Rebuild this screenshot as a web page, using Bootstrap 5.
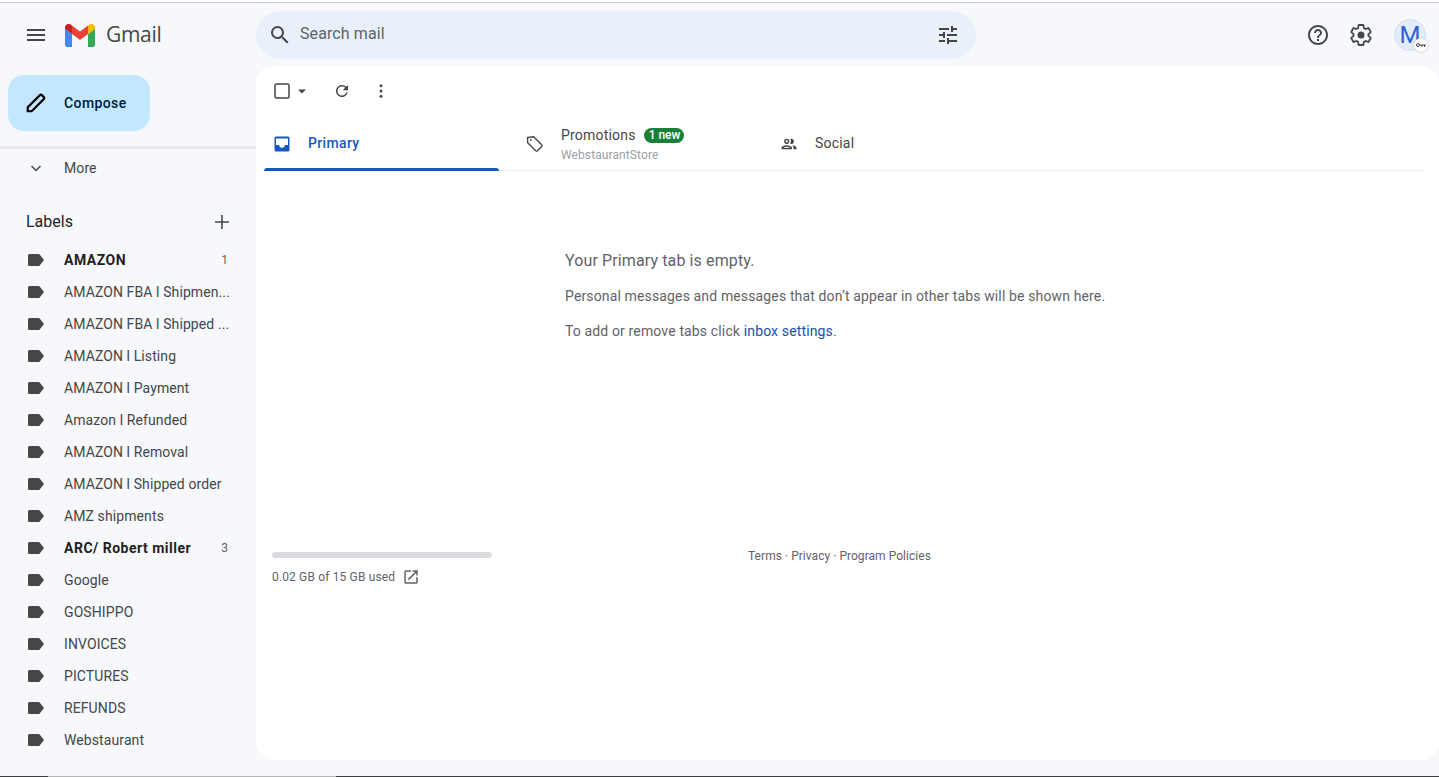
<!DOCTYPE html>
<html lang="en">
<head>
    <meta charset="UTF-8">
    <meta name="viewport" content="width=device-width, initial-scale=1.0">
    <title>Gmail</title>
    <link href="https://cdn.jsdelivr.net/npm/bootstrap@5.3.0/dist/css/bootstrap.min.css" rel="stylesheet">
    <style>
        html, body { height: 100%; overflow: hidden; }
        body {
            background-color: #f6f8fc;
            font-family: Roboto, "Liberation Sans", sans-serif;
            font-size: 14px;
            color: #444746;
        }
        .page-wrap { height: 775px; border-top: 1px solid #c8c9cb; }
        .top-strip { height: 2px; background: #fff; }
        .top-bar { height: 64px; }
        .brand-area { width: 256px; padding-left: 24px; }
        .logo-mark { margin-left: 17px; }
        .gmail-word { font-size: 21px; color: #444746; margin-left: 11px; font-family: "Open Sans", Roboto, sans-serif; letter-spacing: -.3px; }
        .search-box { width: 720px; height: 48px; border-radius: 24px; background: #e9f0fa; padding: 0 16px 0 12px; color: #5f6368; font-size: 16px; }
        .search-box .search-text { margin-left: 8px; padding-bottom: 2px; letter-spacing: .1px; }
        .top-icons { padding-right: 13px; gap: 19px; }
        .avatar-ring { width: 32px; height: 32px; border-radius: 50%; background: #e3ecfb; border: 1px solid #d5dff0; color: #2f62d1; font-size: 24px; line-height: 30px; text-align: center; position: relative; margin-left: 2px; }
        .key-chip { position: absolute; right: -3px; bottom: -2px; width: 14px; height: 14px; border-radius: 50%; background: #fff; box-shadow: 0 0 2px rgba(0,0,0,.3); display: flex; align-items: center; justify-content: center; }
        .side-col { width: 256px; flex: none; }
        .compose-btn { width: 142px; height: 56px; margin: 8px 0 0 8px; border-radius: 16px; background: #c2e7ff; color: #001d35; font-weight: 500; padding-left: 17px; font-size: 14px; letter-spacing: .4px; }
        .compose-btn span { margin-left: 17px; }
        .side-rule { height: 3px; background: #e9eaee; margin-top: 15px; }
        .more-row { height: 32px; padding-left: 29px; margin-top: 3px; }
        .more-row span { margin-left: 21px; letter-spacing: .1px; }
        .labels-head { height: 28px; padding: 0 27px 0 26px; margin-top: 24px; margin-bottom: 8px; font-size: 16px; color: #1f1f1f; }
        .label-row { height: 32px; padding: 0 26px 0 28px; letter-spacing: .1px; }
        .label-row .label-name { margin-left: 20px; flex: 1; white-space: nowrap; overflow: hidden; min-width: 0; }
        .label-row.is-unread { font-weight: 700; color: #1f1f1f; letter-spacing: .5px; }
        .label-count { font-size: 12px; font-weight: 400; color: #5f6368; margin: 0 2px 0 8px; letter-spacing: 0; }
        .main-panel { width: 1183px; height: 693px; background: #fff; border-radius: 16px; padding: 0 15px 0 8px; flex: none; }
        .tool-row { height: 48px; padding-left: 10px; }
        .caret-icon { margin-left: 8px; }
        .refresh-icon { margin-left: 27px; }
        .dots-icon { margin-left: 21px; }
        .tab-row { border-bottom: 1px solid #eceff1; height: 56px; }
        .tab-item { width: 235px; padding: 2px 0 0 10px; height: 55px; position: relative; letter-spacing: .2px; }
        .tab-item.is-active { color: #1558c0; font-weight: 500; letter-spacing: .35px; }
        .tab-item.is-active::after { content: ""; position: absolute; left: 0; right: 0; bottom: -1px; height: 3px; background: #1558c0; border-radius: 3px 3px 0 0; }
        .tab-promo { width: 253px; padding-left: 27px; }
        .tab-social { padding-left: 28px; }
        .tab-title { margin-left: 18px; }
        .tab-social .tab-title { margin-left: 17px; }
        .promo-text { margin-left: 17px; padding-top: 2px; }
        .promo-head { line-height: 18px; }
        .tab-sub { font-size: 12px; color: #9aa0a6; line-height: 16px; margin-top: 3px; letter-spacing: .1px; }
        .new-pill { background: #188038; color: #fff; font-size: 12px; font-weight: 500; border-radius: 8px; line-height: 15px; padding: 0 4px 0 5px; margin-left: 8px; letter-spacing: 0; }
        .empty-box { margin: 78px 0 0 301px; }
        .empty-title { font-size: 16px; color: #5f6368; margin-bottom: 13px; letter-spacing: .12px; }
        .empty-line { color: #5f6368; margin-bottom: 15px; line-height: 20px; letter-spacing: .14px; }
        .empty-line a { color: #1a4fb0; text-decoration: none; }
        .foot-row { margin-top: 211px; padding-left: 8px; font-size: 12px; color: #5f6368; }
        .storage-col { width: 220px; flex: none; }
        .storage-bar { height: 6px; border-radius: 3px; background: #dadce0; margin-bottom: 10px; }
        .storage-text { letter-spacing: .15px; }
        .storage-link { margin-left: 7px; }
        .foot-links { margin-left: 256px; margin-top: -5px; letter-spacing: .04px; }
        .bottom-edge { position: absolute; left: 0; right: 0; bottom: 0; height: 1px; background: #3c4043; }
        .bottom-edge::after { content: ""; position: absolute; left: 48px; width: 288px; height: 1px; background: #b5b5b5; }
    </style>
</head>
<body class="position-relative">
    <div class="top-strip"></div>
    <div class="page-wrap">
        <div class="top-bar d-flex align-items-center">
            <div class="brand-area d-flex align-items-center">
                <svg width="24" height="24" viewBox="0 0 24 24" fill="#444746"><path d="M3 18h18v-2H3v2zm0-5h18v-2H3v2zm0-7v2h18V6H3z"/></svg>
                <svg class="logo-mark" width="30" height="23" viewBox="0 0 30 23">
                    <path fill="#4285f4" d="M0 20.8C0 22 1 23 2.100 23H7V10L0 4.800z"/>
                    <path fill="#34a853" d="M23 23h4.900C29 23 30 22 30 20.800V4.800L23 10z"/>
                    <path fill="#fbbc04" d="M23 1.500V10l7-5.200V3.400C30 .5 26.700-1 24.500.4z"/>
                    <path fill="#ea4335" d="M7 10V1.500l8 6 8-6V10l-8 6z"/>
                    <path fill="#c5221f" d="M0 3.400v1.400L7 10V1.500L5.500.4C3.300-1 0 .5 0 3.400z"/>
                </svg>
                <span class="gmail-word">Gmail</span>
            </div>
            <div class="search-box d-flex align-items-center">
                <svg width="24" height="24" viewBox="0 0 24 24" fill="#444746"><path d="M15.500 14h-.79l-.28-.27A6.470 6.470 0 0 0 16 9.500 6.500 6.500 0 1 0 9.500 16c1.610 0 3.090-.59 4.230-1.570l.27.28v.79l5 4.990L20.490 19l-4.990-5zm-6 0C7.010 14 5 11.990 5 9.500S7.010 5 9.500 5 14 7.010 14 9.500 11.990 14 9.500 14z"/></svg>
                <span class="search-text flex-grow-1">Search mail</span>
                <svg width="24" height="24" viewBox="0 0 24 24" fill="#444746"><path d="M3 17v2h6v-2H3zM3 5v2h10V5H3zm10 16v-2h8v-2h-8v-2h-2v6h2zM7 9v2H3v2h4v2h2V9H7zm14 4v-2H11v2h10zm-6-4h2V7h4V5h-4V3h-2v6z"/></svg>
            </div>
            <div class="top-icons d-flex align-items-center ms-auto">
                <svg width="24" height="24" viewBox="0 0 24 24" fill="#444746"><path d="M11 18h2v-2h-2v2zm1-16C6.480 2 2 6.480 2 12s4.480 10 10 10 10-4.480 10-10S17.520 2 12 2zm0 18c-4.410 0-8-3.590-8-8s3.590-8 8-8 8 3.590 8 8-3.590 8-8 8zm0-14c-2.210 0-4 1.790-4 4h2c0-1.100.9-2 2-2s2 .9 2 2c0 2-3 1.750-3 5h2c0-2.250 3-2.500 3-5 0-2.210-1.790-4-4-4z"/></svg>
                <svg width="24" height="24" viewBox="0 0 24 24" fill="#444746"><path d="M19.430 12.980c.04-.32.07-.64.07-.98s-.03-.66-.07-.98l2.110-1.650c.19-.15.24-.42.12-.64l-2-3.460c-.12-.22-.39-.3-.61-.22l-2.490 1c-.52-.4-1.080-.73-1.690-.98l-.38-2.650A.488.488 0 0 0 14 2h-4c-.25 0-.46.18-.49.42l-.38 2.650c-.61.25-1.170.59-1.690.98l-2.490-1c-.23-.09-.49 0-.61.22l-2 3.460c-.13.22-.07.49.12.64l2.110 1.650c-.04.32-.07.65-.07.98s.03.66.07.98l-2.110 1.650c-.19.15-.24.42-.12.64l2 3.460c.12.22.39.3.61.22l2.490-1c.52.4 1.080.73 1.690.98l.38 2.650c.03.24.24.42.49.42h4c.25 0 .46-.18.49-.42l.38-2.650c.61-.25 1.170-.59 1.690-.98l2.490 1c.23.09.49 0 .61-.22l2-3.460c.12-.22.07-.49-.12-.64l-2.110-1.650z" fill="none" stroke="#444746" stroke-width="1.800"/><circle cx="12" cy="12" r="3.500"/></svg>
                <div class="avatar-ring">M
                    <span class="key-chip"><svg width="10" height="6" viewBox="0 0 10 6"><circle cx="2" cy="3" r="1.500" fill="none" stroke="#444" stroke-width="1"/><path d="M3.500 2.500H10v1H9v1.500H8V3.500H6.500V5h-1V3.500h-2z" fill="#444"/></svg></span>
                </div>
            </div>
        </div>

        <div class="d-flex">
            <div class="side-col">
                <div class="compose-btn d-flex align-items-center">
                    <svg width="22" height="24" viewBox="0 0 24 24" fill="none" stroke="#000" stroke-width="2.400"><path d="M3 21v-4.300L16.300 3.400a1.500 1.500 0 0 1 2.100 0l2.200 2.200a1.500 1.500 0 0 1 0 2.100L7.300 21z"/></svg>
                    <span>Compose</span>
                </div>
                <div class="side-rule"></div>
                <div class="more-row d-flex align-items-center">
                    <svg width="14" height="14" viewBox="0 0 14 14" fill="none" stroke="#444746" stroke-width="1.500"><path d="M2.500 5L7 9.500 11.500 5"/></svg>
                    <span>More</span>
                </div>
                <div class="labels-head d-flex align-items-center justify-content-between">
                    <span>Labels</span>
                    <svg width="14" height="14" viewBox="0 0 14 14" fill="#444746"><path d="M6.200 0h1.600v6.200H14v1.600H7.800V14H6.200V7.800H0V6.200h6.200z"/></svg>
                </div>
                <div id="label-list"></div>
            </div>
            <div class="main-panel">
                <div class="tool-row d-flex align-items-center">
                    <svg width="16" height="16" viewBox="0 0 16 16" fill="none" stroke="#444746" stroke-width="1.500"><rect x="1" y="1" width="14" height="14" rx="1.500"/></svg>
                    <svg class="caret-icon" width="8" height="5" viewBox="0 0 10 6" fill="#444746"><path d="M0 .5h10L5 5.500z"/></svg>
                    <svg class="refresh-icon" width="18" height="18" viewBox="0 0 24 24" fill="#444746"><path d="M17.650 6.350A7.958 7.958 0 0 0 12 4c-4.420 0-7.990 3.580-7.990 8s3.570 8 7.990 8c3.730 0 6.840-2.550 7.730-6h-2.080A5.990 5.990 0 0 1 12 18c-3.310 0-6-2.690-6-6s2.690-6 6-6c1.660 0 3.140.69 4.220 1.780L13 11h7V4l-2.350 2.350z"/></svg>
                    <svg class="dots-icon" width="18" height="18" viewBox="0 0 24 24" fill="#444746"><circle cx="12" cy="5" r="2"/><circle cx="12" cy="12" r="2"/><circle cx="12" cy="19" r="2"/></svg>
                </div>
                <div class="tab-row d-flex">
                    <div class="tab-item is-active d-flex align-items-center">
                        <svg width="16" height="16" viewBox="0 0 16 16" fill="#1558c0" fill-rule="evenodd"><path d="M2 .5h12A1.500 1.500 0 0 1 15.500 2v12a1.500 1.500 0 0 1-1.500 1.500H2A1.500 1.500 0 0 1 .5 14V2A1.500 1.500 0 0 1 2 .5zm0 2V9h3.300a2.700 2.700 0 0 0 5.400 0H14V2.500z"/></svg>
                        <span class="tab-title">Primary</span>
                    </div>
                    <div class="tab-item tab-promo d-flex align-items-center">
                        <svg width="18" height="18" viewBox="0 0 18 18" fill="none" stroke="#444746" stroke-width="1.400"><path d="M1.500 2.500l6.200-.8 8 8a1.300 1.300 0 0 1 0 1.800l-4.200 4.200a1.300 1.300 0 0 1-1.800 0l-8-8z" stroke-linejoin="round"/><circle cx="4.800" cy="5" r=".9" fill="#444746" stroke="none"/></svg>
                        <div class="promo-text">
                            <div class="promo-head d-flex align-items-center">Promotions <span class="new-pill">1 new</span></div>
                            <div class="tab-sub">WebstaurantStore</div>
                        </div>
                    </div>
                    <div class="tab-item tab-social d-flex align-items-center">
                        <svg width="18" height="18" viewBox="0 0 24 24" fill="#444746"><path d="M9 13.750c-2.340 0-7 1.170-7 3.500V19h14v-1.750c0-2.330-4.660-3.500-7-3.500zM4.340 17c.84-.58 2.870-1.250 4.660-1.250s3.820.67 4.660 1.250H4.340zM9 12c1.930 0 3.500-1.570 3.500-3.500S10.930 5 9 5 5.500 6.570 5.500 8.500 7.070 12 9 12zm0-5c.83 0 1.500.67 1.500 1.500S9.830 10 9 10s-1.500-.67-1.500-1.500S8.170 7 9 7zm7.040 6.810c1.160.84 1.960 1.960 1.960 3.440V19h4v-1.750c0-2.020-3.500-3.170-5.960-3.440zM15 12c1.930 0 3.500-1.570 3.500-3.500S16.930 5 15 5c-.54 0-1.040.13-1.500.35.630.89 1 1.980 1 3.150s-.37 2.260-1 3.150c.46.22.96.35 1.500.35z"/></svg>
                        <span class="tab-title">Social</span>
                    </div>
                </div>
                <div class="empty-box">
                    <div class="empty-title">Your Primary tab is empty.</div>
                    <div class="empty-line">Personal messages and messages that don’t appear in other tabs will be shown here.</div>
                    <div class="empty-line">To add or remove tabs click <a href="#">inbox settings</a>.</div>
                </div>
                <div class="foot-row d-flex">
                    <div class="storage-col">
                        <div class="storage-bar"></div>
                        <div class="d-flex align-items-center"><span class="storage-text">0.02 GB of 15 GB used</span>
                            <svg class="storage-link" width="18" height="18" viewBox="0 0 24 24" fill="#5f6368"><path d="M19 19H5V5h7V3H5a2 2 0 0 0-2 2v14a2 2 0 0 0 2 2h14c1.100 0 2-.9 2-2v-7h-2v7zM14 3v2h3.590l-9.830 9.830 1.410 1.410L19 6.410V10h2V3h-7z"/></svg>
                        </div>
                    </div>
                    <div class="foot-links">Terms · Privacy · Program Policies</div>
                </div>
            </div>
        </div>
    </div>
    <div class="bottom-edge"></div>
    <script>
        // label rows of the side column
        const labels = [
            ['AMAZON', 1], ['AMAZON FBA l Shipmen...'], ['AMAZON FBA l Shipped ...'], ['AMAZON l Listing'],
            ['AMAZON l Payment'], ['Amazon l Refunded'], ['AMAZON l Removal'], ['AMAZON l Shipped order'],
            ['AMZ shipments'], ['ARC/ Robert miller', 3], ['Google'], ['GOSHIPPO'], ['INVOICES'],
            ['PICTURES'], ['REFUNDS'], ['Webstaurant']
        ];
        document.getElementById('label-list').innerHTML = labels.map(function(l) {
            return '<div class="label-row d-flex align-items-center' + (l[1] ? ' is-unread' : '') + '">' +
                '<svg width="16" height="12" viewBox="0 0 16 12" fill="#444746"><path d="M1.500 0H10.500a1.500 1.500 0 0 1 1.200.6L16 6l-4.300 5.400a1.500 1.500 0 0 1-1.200.6H1.500A1.500 1.500 0 0 1 0 10.500v-9A1.500 1.500 0 0 1 1.500 0z"/></svg>' +
                '<span class="label-name">' + l[0] + '</span>' +
                (l[1] ? '<span class="label-count">' + l[1] + '</span>' : '') + '</div>';
        }).join('');
    </script>
    <script src="https://cdn.jsdelivr.net/npm/bootstrap@5.3.0/dist/js/bootstrap.bundle.min.js"></script>
</body>
</html>
